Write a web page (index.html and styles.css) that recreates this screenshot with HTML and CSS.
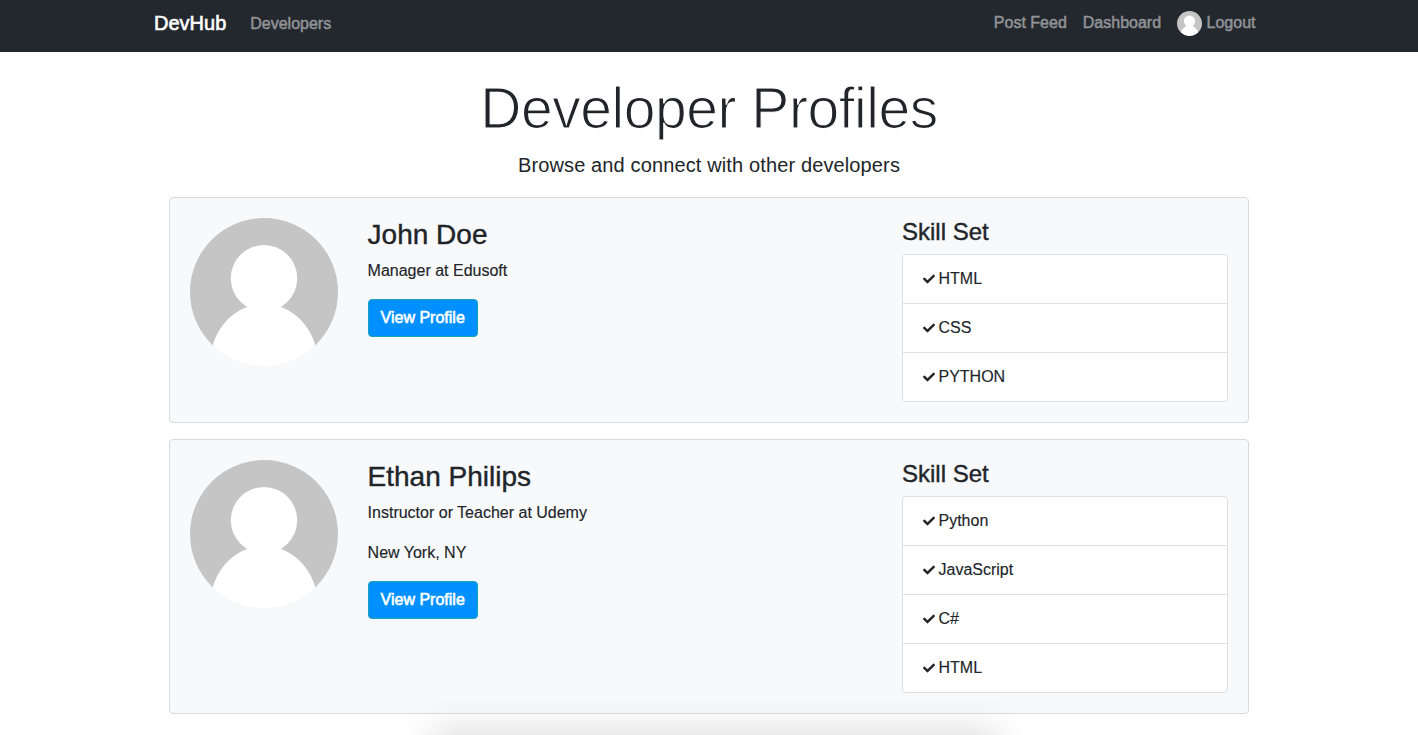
FILE: index.html
```html
<!DOCTYPE html>
<html lang="en">
<head>
<meta charset="utf-8">
<title>DevHub</title>
<link rel="stylesheet" href="styles.css">
</head>
<body>
<svg class="defs" width="0" height="0" aria-hidden="true">
  <defs>
    <clipPath id="round"><circle cx="74" cy="74" r="74"/></clipPath>
    <symbol id="avatar" viewBox="0 0 148 148">
      <g clip-path="url(#round)">
        <path fill="#c5c5c5" d="M0 0H148V128H0Z"/>
        <circle cx="74" cy="60.2" r="33.2" fill="#fff"/>
        <ellipse cx="74" cy="146" rx="54" ry="60" fill="#fff"/>
      </g>
    </symbol>
    <symbol id="check" viewBox="0 0 512 512">
      <path fill="currentColor" d="M173.898 439.404l-166.4-166.4c-9.997-9.997-9.997-26.206 0-36.204l36.203-36.204c9.997-9.998 26.207-9.998 36.204 0L192 312.69 432.095 72.596c9.997-9.997 26.207-9.997 36.204 0l36.203 36.204c9.997 9.997 9.997 26.206 0 36.204l-294.4 294.401c-9.998 9.997-26.207 9.997-36.204-.001z"/>
    </symbol>
  </defs>
</svg>
<nav class="navbar">
  <div class="navbar-inner">
    <a class="brand">DevHub</a>
    <a class="nav-link developers">Developers</a>
    <div class="nav-right">
      <a class="nav-link">Post Feed</a>
      <a class="nav-link">Dashboard</a>
      <a class="nav-link logout"><svg class="nav-avatar"><use href="#avatar"/></svg><span>Logout</span></a>
    </div>
  </div>
</nav>
<main class="profiles">
  <h1 class="title">Developer Profiles</h1>
  <p class="lead">Browse and connect with other developers</p>
  <section class="card">
    <svg class="avatar"><use href="#avatar"/></svg>
    <div class="info">
      <h3 class="name">John Doe</h3>
      <p class="line">Manager at Edusoft</p>
      <a class="btn">View Profile</a>
    </div>
    <div class="skills">
      <h4 class="skills-title">Skill Set</h4>
      <ul class="list">
        <li class="item"><svg class="check"><use href="#check"/></svg>HTML</li>
        <li class="item"><svg class="check"><use href="#check"/></svg>CSS</li>
        <li class="item"><svg class="check"><use href="#check"/></svg>PYTHON</li>
      </ul>
    </div>
  </section>
  <section class="card">
    <svg class="avatar"><use href="#avatar"/></svg>
    <div class="info">
      <h3 class="name">Ethan Philips</h3>
      <p class="line">Instructor or Teacher at Udemy</p>
      <p class="line">New York, NY</p>
      <a class="btn">View Profile</a>
    </div>
    <div class="skills">
      <h4 class="skills-title">Skill Set</h4>
      <ul class="list">
        <li class="item"><svg class="check"><use href="#check"/></svg>Python</li>
        <li class="item"><svg class="check"><use href="#check"/></svg>JavaScript</li>
        <li class="item"><svg class="check"><use href="#check"/></svg>C#</li>
        <li class="item"><svg class="check"><use href="#check"/></svg>HTML</li>
      </ul>
    </div>
  </section>
</main>
<div class="bottom-shadow"></div>
</body>
</html>
```

FILE: styles.css
```css
* { box-sizing: border-box; }
html { overflow: hidden; }
body {
  margin: 0;
  height: 735px;
  overflow: hidden;
  position: relative;
  background: #fff;
  color: #212529;
  font: 16px/24px "Liberation Sans", Arial, sans-serif;
  -webkit-text-stroke: .15px currentColor;
}
h1, h3, h4, p, ul { margin: 0; padding: 0; font-weight: 400; }
.defs { position: absolute; }
.navbar { height: 52px; background: #23282e; }
.navbar-inner {
  display: flex;
  width: 1110px;
  margin: 0 auto;
  padding-top: 8px;
}
.brand {
  color: #fff;
  font-size: 20px;
  line-height: 30px;
  margin-right: 24px;
  -webkit-text-stroke: .6px #fff;
}
.nav-link {
  color: #919396;
  line-height: 30px;
  -webkit-text-stroke: .5px #919396;
}
.developers { padding-top: 1px; }
.nav-right { display: flex; gap: 16px; margin-left: auto; padding-right: 8.5px; }
.logout { display: flex; gap: 4.5px; }
.nav-avatar { width: 25px; height: 25px; margin-top: 3px; }
.profiles { width: 1080px; margin: 0 auto; padding-top: 23px; }
.title {
  text-align: center;
  font-size: 57px;
  line-height: 67px;
  letter-spacing: -.45px;
  color: #212529;
  -webkit-text-stroke: 1.2px #fff;
}
.lead {
  margin: 8px 0 17px;
  text-align: center;
  font-size: 20px;
  line-height: 30px;
  letter-spacing: .13px;
  -webkit-text-stroke: 0;
}
.card {
  display: flex;
  margin-bottom: 16px;
  padding: 20px;
  border: 1px solid #d9dadb;
  border-radius: 4px;
  background: #f8f9fb;
}
.avatar { width: 148px; height: 148px; flex: none; }
.info { flex: 1; padding-left: 29.6px; }
.name { font-size: 28px; line-height: 33px; margin-bottom: 8px; -webkit-text-stroke: .4px currentColor; }
.line { margin-bottom: 16px; }
.btn {
  display: inline-block;
  padding: 6px 12px;
  border: 1px solid #17a2b8;
  border-radius: 4px;
  background: #0090ff;
  color: #fff;
  -webkit-text-stroke: .6px #fff;
  vertical-align: top;
}
.skills { width: 326px; }
.skills-title { font-size: 24px; line-height: 28px; margin-bottom: 8px; -webkit-text-stroke: .4px currentColor; }
.list {
  list-style: none;
  border: 1px solid #dfdfdf;
  border-radius: 4px;
  background: #fff;
}
.item {
  display: flex;
  align-items: center;
  gap: 3.5px;
  height: 49px;
  padding-left: 20px;
  border-bottom: 1px solid #dfdfdf;
}
.item:last-child { height: 48px; border-bottom: 0; }
.check { width: 12px; height: 12px; margin-bottom: 1px; }
.bottom-shadow {
  position: absolute;
  left: 400px;
  bottom: 0;
  width: 630px;
  height: 40px;
  background: linear-gradient(to bottom, rgba(0, 0, 0, 0), rgba(0, 0, 0, .025) 50%, rgba(0, 0, 0, .08));
  -webkit-mask-image: linear-gradient(to right, transparent 1%, #000 9%, #000 91%, transparent 99%);
  mask-image: linear-gradient(to right, transparent 1%, #000 9%, #000 91%, transparent 99%);
}
```
